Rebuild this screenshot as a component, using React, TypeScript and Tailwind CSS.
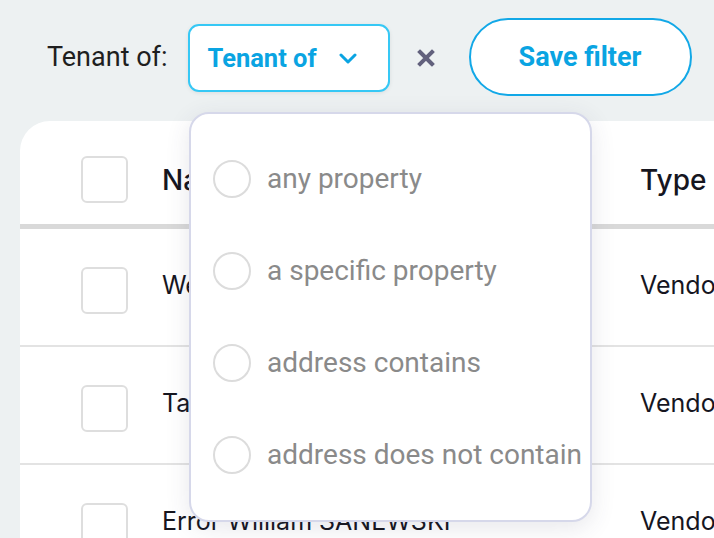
import React from "react";

const options = ["any property", "a specific property", "address contains", "address does not contain"];

const rows = [
  { name: "Wendy Parker", type: "Vendor" },
  { name: "Tamara Holt", type: "Vendor" },
  { name: "Error William SANEWSKI", type: "Vendor" },
];

function Checkbox() {
  return <div className="h-[47px] w-[47px] shrink-0 rounded-[6px] border-2 border-[#dedede] bg-white" />;
}

export default function App() {
  return (
    <div className="relative h-[538px] w-[714px] overflow-hidden bg-[#edf1f2] font-['Roboto',sans-serif]">
      {/* filter bar */}
      <div className="flex h-[114px] items-start pl-[47px] pt-[18px]">
        <div className="flex h-[78px] items-center">
          <span className="text-[27px] text-[#1f1f1f]">Tenant of:</span>
          <button className="ml-[20px] mt-[2px] flex h-[68px] w-[202px] items-center rounded-[11px] border-2 border-[#36c8f5] bg-white pl-[18px] shadow-[0_1px_4px_rgba(0,0,0,0.08)]">
            <span className="text-[25.5px] font-bold text-[#0aa4e2]">Tenant of</span>
            <svg className="ml-[22px]" width="18" height="12" viewBox="0 0 18 12" fill="none">
              <path d="M2 3l7 7 7-7" stroke="#0aa4e2" strokeWidth="3" strokeLinecap="round" strokeLinejoin="round" />
            </svg>
          </button>
          <svg className="ml-[27px] mt-[2px]" width="18" height="18" viewBox="0 0 18 18">
            <path d="M3 3l12 12M15 3L3 15" stroke="#62617d" strokeWidth="4" strokeLinecap="square" />
          </svg>
          <button className="ml-[34px] h-[78px] w-[223px] rounded-full border-2 border-[#12a8e7] bg-white text-[27px] font-bold text-[#0aa4e2]">
            Save filter
          </button>
        </div>
      </div>

      {/* table card */}
      <div className="ml-[20px] mt-[7px] w-[760px] rounded-tl-[30px] bg-white font-['Inter',sans-serif] text-[25px] text-[#16161f]">
        <div className="flex h-[108px] items-center border-b-[5px] border-[#d9d9d9] pl-[61px] pt-[14px]">
          <Checkbox />
          <span className="ml-[34px] w-[478px] text-[28px] font-medium">Name</span>
          <span className="text-[28px] font-medium">Type</span>
        </div>
        {rows.map((r) => (
          <div key={r.name} className="flex h-[118px] items-center border-b-2 border-[#e3e3e3] pl-[61px] pt-[6px]">
            <Checkbox />
            <span className="-mt-[8px] ml-[34px] w-[478px] whitespace-nowrap">{r.name}</span>
            <span className="-mt-[8px]">{r.type}</span>
          </div>
        ))}
      </div>

      {/* dropdown */}
      <div className="absolute left-[189px] top-[112px] h-[410px] w-[403px] rounded-[20px] border-2 border-[#d6d8ea] bg-white pt-[19px] shadow-[0_6px_24px_rgba(60,60,90,0.12)]">
        {options.map((o) => (
          <div key={o} className="flex h-[92px] items-center pl-[22px]">
            <div className="h-[38px] w-[38px] shrink-0 rounded-full border-2 border-[#dcdcdc]" />
            <span className="ml-[16px] whitespace-nowrap text-[28px] text-[#8a8a8a]">{o}</span>
          </div>
        ))}
      </div>
    </div>
  );
}
